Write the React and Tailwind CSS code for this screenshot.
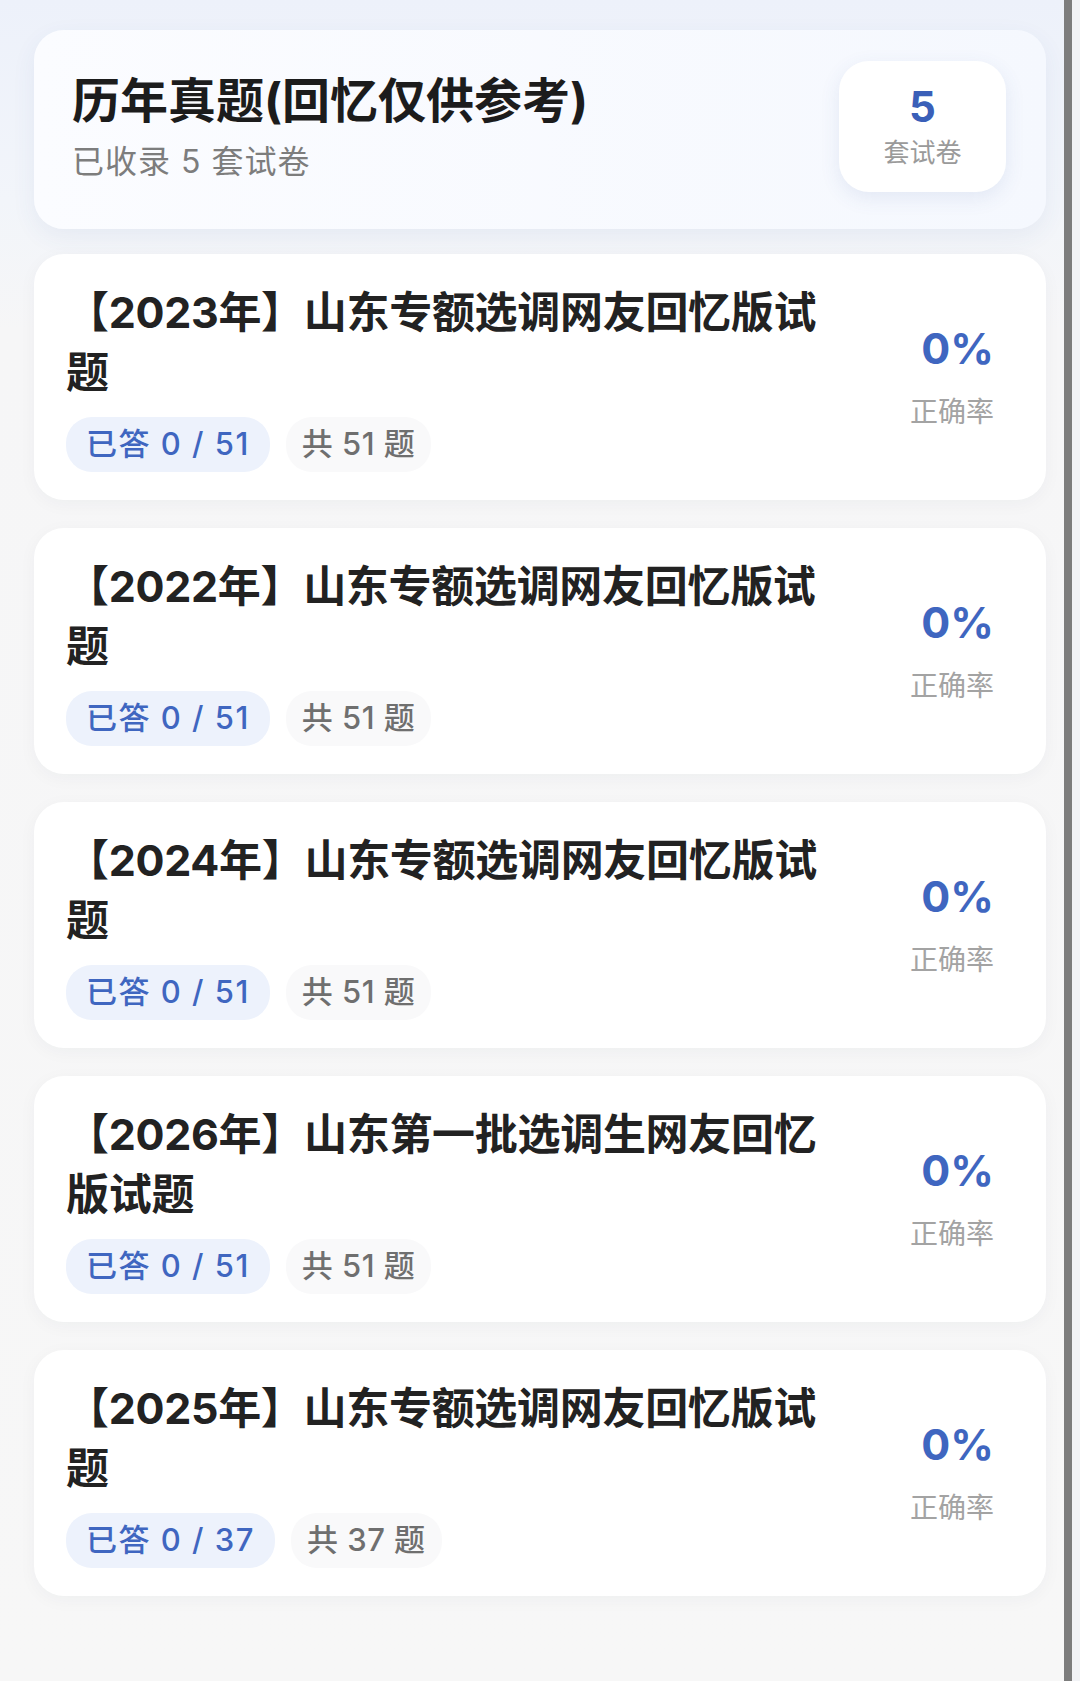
import React from "react";

const papers = [
  { title: "【2023年】山东专额选调网友回忆版试题", done: 0, total: 51 },
  { title: "【2022年】山东专额选调网友回忆版试题", done: 0, total: 51 },
  { title: "【2024年】山东专额选调网友回忆版试题", done: 0, total: 51 },
  { title: "【2026年】山东第一批选调生网友回忆版试题", done: 0, total: 51 },
  { title: "【2025年】山东专额选调网友回忆版试题", done: 0, total: 37 },
];

function PaperCard({ p }) {
  return (
    <div className="flex items-center rounded-[30px] bg-white pl-8 pr-[52px] pt-[28px] pb-[28px] shadow-[0_4px_18px_rgba(30,40,80,0.04)]">
      <div className="w-[772px] shrink-0">
        <div className="text-[43px] leading-[60px] font-bold tracking-[-0.3px] text-[#222222]">{p.title}</div>
        <div className="mt-[15px] flex items-center gap-4">
          <div className="flex h-[55px] items-center rounded-[26px] bg-[#edf2fc] px-5 text-[31px] font-medium tracking-[1.5px] text-[#3f66c0]">
            已答 {p.done} / {p.total}
          </div>
          <div className="flex h-[55px] items-center rounded-[26px] bg-[#f9f9fa] px-4 text-[31px] font-medium tracking-[0.5px] text-[#6f6f6f]">
            共 {p.total} 题
          </div>
        </div>
      </div>
      <div className="flex flex-1 flex-col items-end">
        <div className="text-[43px] leading-[52px] font-bold text-[#3f66c0]">0%</div>
        <div className="mt-[18px] text-[28px] leading-[40px] text-[#a3a3a3]">正确率</div>
      </div>
    </div>
  );
}

export default function App() {
  return (
    <div className="flex min-h-[1681px] w-[1080px] font-['Inter','Noto_Sans_CJK_SC',sans-serif] bg-[linear-gradient(180deg,#edf1fa_0px,#f2f5fa_200px,#f6f6f7_330px,#f7f7f7_100%)]">
      <div className="w-[1064px] shrink-0 pl-[34px] pr-[18px] pt-[30px] pb-[80px]">
        <div className="flex items-center justify-between rounded-[30px] bg-[linear-gradient(90deg,#fbfcff_0%,#f5f8fe_100%)] pl-[38px] pr-[40px] pt-[31px] pb-[37px] shadow-[0_8px_24px_rgba(60,90,160,0.07)]">
          <div>
            <div className="text-[48px] leading-[60px] font-bold text-[#1c1c1c]">历年真题(回忆仅供参考)</div>
            <div className="mt-[11px] text-[32px] leading-[40px] tracking-[1px] text-[#7d7d7d]">已收录 5 套试卷</div>
          </div>
          <div className="flex h-[131px] w-[167px] flex-col items-center justify-center rounded-[30px] bg-white shadow-[0_6px_20px_rgba(60,90,160,0.10)]">
            <div className="text-[42px] leading-[48px] font-bold text-[#3a5fb8]">5</div>
            <div className="mt-1 text-[26px] leading-[36px] text-[#9a9a9a]">套试卷</div>
          </div>
        </div>
        <div className="mt-[25px] flex flex-col gap-[28px]">
          {papers.map((p, i) => (
            <PaperCard key={i} p={p} />
          ))}
        </div>
      </div>
      <div className="w-2 shrink-0 bg-[#7d7d7d]" />
      <div className="w-2 shrink-0 bg-[#f2f3f6]" />
    </div>
  );
}
